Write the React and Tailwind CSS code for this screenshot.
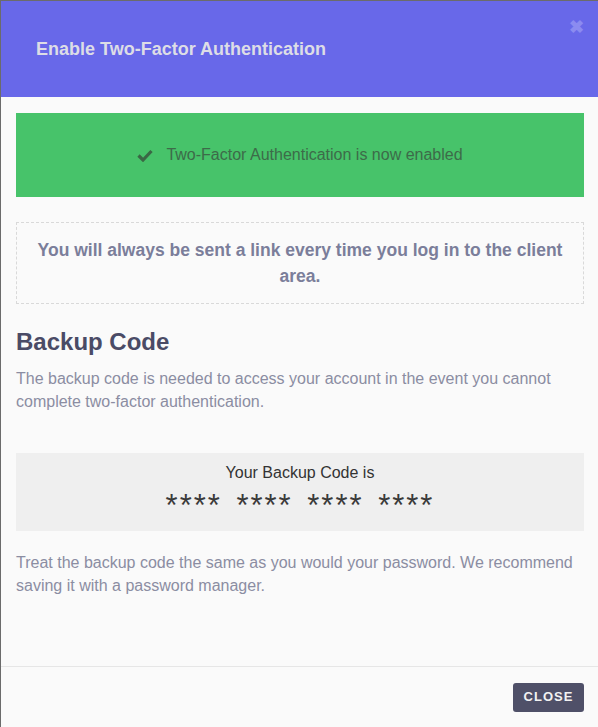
import React from 'react'

export default function App() {
  return (
    <div
      className="h-[727px] w-[598px] flex flex-col border-t border-l border-[#6b6b6b] bg-[#fafafa] overflow-hidden"
      style={{ fontFamily: '"Liberation Sans", Arial, sans-serif' }}
    >
      {/* Header */}
      <header className="relative h-[96px] shrink-0 bg-[#6868e9] flex items-center pl-[35px]">
        <h2 className="text-[18px] font-bold text-[#dddde6]">Enable Two-Factor Authentication</h2>
        <button className="absolute right-[14px] top-[17px] text-[#8b8bf0] text-[18px] font-bold leading-none">
          ✖
        </button>
      </header>

      {/* Body */}
      <main className="flex-1 pl-[15px] pr-[14px] pt-[16px]">
        <div className="h-[84px] bg-[#47c36a] flex items-center justify-center gap-[13px] text-[#3d6b49] text-[16px]">
          <svg width="16" height="13" viewBox="0 0 16 13" fill="none">
            <path d="M1.5 6.5 L6 11 L14.5 2" stroke="#3a6845" strokeWidth="3.2" />
          </svg>
          <span>Two-Factor Authentication is now enabled</span>
        </div>

        <div className="mt-[25px] border border-dashed border-[#d9d9d9] py-[14px] px-[8px] text-center text-[17.5px] leading-[26px] font-bold text-[#7b7e9a]">
          You will always be sent a link every time you log in to the client area.
        </div>

        <h3 className="mt-[23px] text-[24px] font-bold leading-[29px] text-[#4a4b66]">Backup Code</h3>
        <p className="mt-[11px] text-[16px] leading-[23px] text-[#8b8da2]">
          The backup code is needed to access your account in the event you cannot complete two-factor authentication.
        </p>

        <div className="mt-[40px] h-[78px] bg-[#efefef] flex flex-col items-center pt-[10px] text-[#333]">
          <div className="text-[16px] leading-[20px]">Your Backup Code is</div>
          <div className="mt-[6px] h-[26px] text-[31px] leading-[34px] tracking-[2px] [word-spacing:4px] text-[#3a3a3a]">
            **** **** **** ****
          </div>
        </div>

        <p className="mt-[20px] text-[16px] leading-[23px] text-[#8b8da2]">
          Treat the backup code the same as you would your password. We recommend saving it with a password manager.
        </p>
      </main>

      {/* Footer */}
      <footer className="h-[61px] shrink-0 border-t border-[#e6e6e6] flex items-center justify-end pr-[14px]">
        <button className="h-[29px] w-[71px] rounded-[3px] bg-[#4f5068] text-[#f2f2f2] text-[13px] font-bold tracking-[1px]">
          CLOSE
        </button>
      </footer>
    </div>
  )
}
